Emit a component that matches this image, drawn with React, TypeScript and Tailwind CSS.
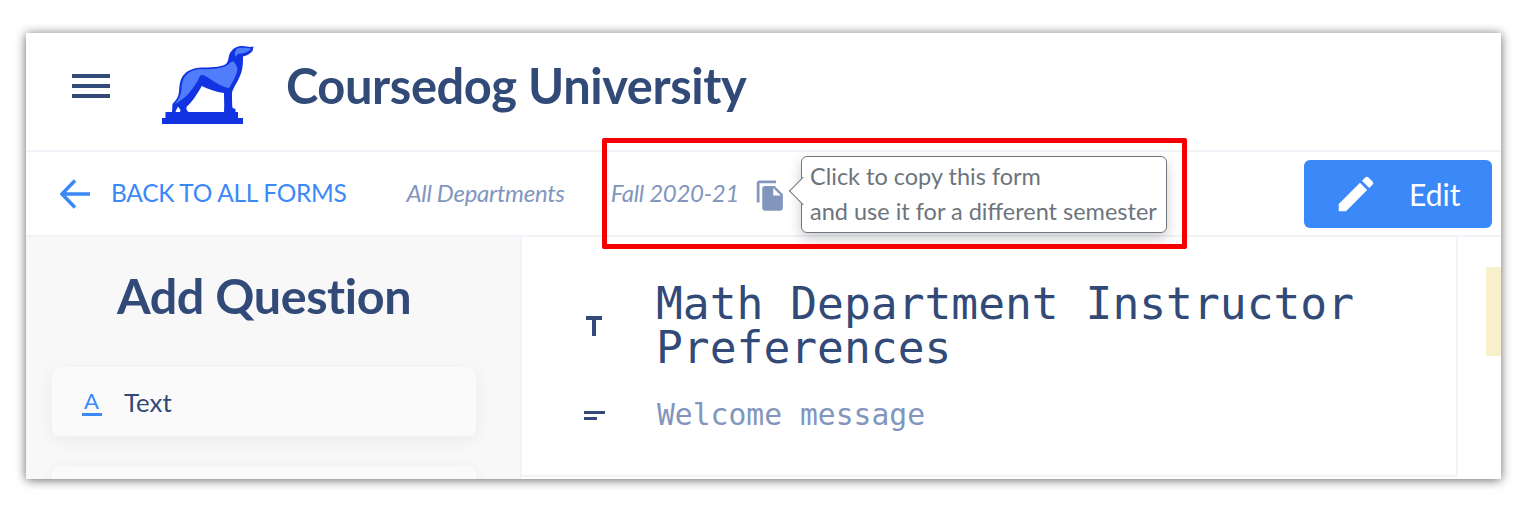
const lato = "font-['Lato','Liberation_Sans',sans-serif]";

function DogLogo() {
  return (
    <svg viewBox="162 44 92 80" className="h-[80px] w-[92px] shrink-0">
      <path
        fill="#1233e2"
        d="M253.5 45.5 L252.5 50 C250 53 246 55 243 55.5 C243 62 243 68 240 75 C237 82 233 87 232 92 C232 97 232 103 232.5 107 L235.5 108 L235.5 111 L238 111 V117 H243 V123 H162 V117 H165.5 V111 H172 L172.5 103 C176 99 178.5 96 179 91 C179.5 84 180 77 185 72.5 C189 68.5 195 67 201 66.5 C210 66.5 220 66.5 226 63 C229 60 228 56 230 52 C233 47 238 44.5 243 45 C246 45.5 250 46.5 253.5 45.5 Z"
      />
      <path
        fill="#4f7dfb"
        d="M200 68 C208 68.5 218 68.5 226 65 C229 63.5 232 59 234 61 C237 64 238 68 237 71 C235 77 232 82 229 87 C222 86 213 80 207 76 C204 74 202 73 200 75 C197 82 190 92 184 97 C180 100 177 102 174.5 103.5 C179 98 181 94 181.5 88 C182 80 184 75 189 71.5 C192 69.5 196 68.5 200 68 Z"
      />
      <path
        fill="#4f7dfb"
        d="M237 47.5 C241 46 246 47.5 251 47.5 C249 51 244 52.5 240 52.5 C238 52.5 236.5 54 235.5 56 C234 53 235 50 237 47.5 Z"
      />
      <path
        fill="#fff"
        d="M201.7 85 C208 88 216 91 224 92 C224 97 224.5 105 224 111 H188.5 C187 110 186 108 186.5 106 C191 102 197 94 201.7 85 Z"
      />
      <path fill="#fff" d="M175.5 110.5 L178 105.5 L180.5 109 L180 111 H176 Z" />
    </svg>
  );
}

function Hamburger() {
  return (
    <div className="flex w-[38px] shrink-0 flex-col gap-[6px]">
      <div className="h-1 bg-[#324a78]" />
      <div className="h-1 bg-[#324a78]" />
      <div className="h-1 bg-[#324a78]" />
    </div>
  );
}

function BackArrow() {
  return (
    <svg viewBox="0 0 30 30" className="h-[30px] w-[30px] shrink-0" fill="none" stroke="#3b88f7" strokeWidth="3.5">
      <path d="M30 15 H2 M15 1.5 L2 15 L15 28.5" />
    </svg>
  );
}

function FileCopy() {
  return (
    <svg viewBox="0 0 24 24" className="h-[33px] w-[33px] shrink-0" fill="#8296bd">
      <path d="M16 1H4c-1.1 0-2 .9-2 2v14h2V3h12V1zm-1 4l6 6v10c0 1.1-.9 2-2 2H7.99C6.89 23 6 22.1 6 21l.01-14c0-1.1.89-2 2-2h7zm-1 7h5.5L14 6.5V12z" />
    </svg>
  );
}

function Pencil() {
  return (
    <svg viewBox="0 0 24 24" className="h-[46px] w-[46px] shrink-0" fill="#fff">
      <path d="M3 17.25V21h3.75L17.81 9.94l-3.75-3.75L3 17.25zM20.71 7.04c.39-.39.39-1.02 0-1.41l-2.34-2.34c-.39-.39-1.02-.39-1.41 0l-1.83 1.83 3.75 3.75 1.83-1.83z" />
    </svg>
  );
}

function Tooltip() {
  return (
    <div className="absolute left-[775px] top-[4px] h-[77px] w-[366px] rounded-md border-[1.5px] border-[#6f7780] bg-white pl-[8px] pt-[2px] text-[23.5px] leading-[35px] text-[#6d747c] shadow-[0_6px_14px_rgba(0,0,0,0.2)]">
      <div className="absolute left-[-9px] top-[24px] h-[20px] w-[20px] rotate-45 border-b-[1.5px] border-l-[1.5px] border-[#6f7780] bg-white" />
      <div className="relative whitespace-nowrap">Click to copy this form</div>
      <div className="relative whitespace-nowrap">and use it for a different semester</div>
    </div>
  );
}

export default function App() {
  return (
    <div className={`relative h-[510px] w-[1527px] overflow-hidden bg-white pl-[26px] pt-[33px] ${lato}`}>
      <div className="flex h-[446px] w-[1475px] flex-col overflow-hidden bg-white shadow-[0_1px_10px_rgba(0,0,0,0.6)]">
        <header className="flex h-[119px] shrink-0 items-center border-b-2 border-[#f0f3f7] pb-[11px] pl-[46px]">
          <Hamburger />
          <div className="ml-[52px] mt-[-3px]">
            <DogLogo />
          </div>
          <h1 className="ml-[32px] mt-[-1px] whitespace-nowrap text-[48.8px] font-bold tracking-[-0.4px] text-[#324a78]">
            Coursedog University
          </h1>
        </header>

        <nav className="relative flex h-[85px] shrink-0 items-center border-b-2 border-[#f0f3f7] pl-[34px] pr-[9px]">
          <BackArrow />
          <span className="ml-[21px] whitespace-nowrap text-[24.5px] tracking-[-0.3px] text-[#3b88f7]">BACK TO ALL FORMS</span>
          <span className="ml-[60px] mt-[-2px] whitespace-nowrap text-[24px] italic tracking-[-0.3px] text-[#8296bd]">All Departments</span>
          <span className="ml-[46px] mt-[-2px] whitespace-nowrap text-[24px] italic tracking-[-0.3px] text-[#8296bd]">Fall 2020-21</span>
          <span className="ml-[15px] mt-[3px]">
            <FileCopy />
          </span>
          <Tooltip />
          <button className="ml-auto flex h-[68px] w-[188px] items-center rounded-md bg-[#3b88f9] pl-[29px] text-[30px] text-white">
            <Pencil />
            <span className="ml-[30px] pt-[2px]">Edit</span>
          </button>
        </nav>

        <div className="flex min-h-0 flex-1">
          <aside className="w-[496px] shrink-0 border-r-2 border-[#f0f3f7] bg-[#f8f8f8] pl-[26px] pr-[44px] pt-[27px]">
            <h2 className="whitespace-nowrap text-center text-[48.5px] font-bold leading-[62px] tracking-[-0.4px] text-[#324a78]">Add Question</h2>
            <div className="mt-[41px] flex h-[69px] items-center rounded-lg bg-[#fafafa] pl-[29px] pt-[1px] shadow-[0_4px_18px_rgba(0,0,0,0.06)]">
              <span className="flex w-[21px] flex-col items-center pt-[2px]">
                <span className="text-[22px] leading-[20px] text-[#3b88f7]">A</span>
                <span className="mt-[2px] h-[3px] w-[20px] bg-[#3b88f7]" />
              </span>
              <span className="ml-[22px] text-[25.8px] text-[#324a78]">Text</span>
            </div>
            <div className="mt-[30px] h-[69px] rounded-lg bg-[#fafafa] shadow-[0_4px_18px_rgba(0,0,0,0.06)]" />
          </aside>

          <main className="h-[240px] w-[936px] shrink-0 border-b-2 border-r-2 border-[#f0f3f7] pl-[62px] pt-[45px] font-['DejaVu_Sans_Mono',monospace]">
            <div className="flex items-center">
              <span className="flex w-[72px] shrink-0 justify-start pl-[2px]">
                <svg viewBox="0 0 16 20" className="h-[20px] w-[16px]" fill="#324a78">
                  <path d="M0 0 H16 V4 H10 V20 H6 V4 H0 Z" />
                </svg>
              </span>
              <h2 className="w-[750px] text-[44.6px] leading-[44px] text-[#324a78]">Math Department Instructor Preferences</h2>
            </div>
            <div className="mt-[27px] flex items-center">
              <span className="flex w-[73px] shrink-0 flex-col gap-[3px]">
                <span className="h-[3px] w-[21px] bg-[#324a78]" />
                <span className="h-[3px] w-[13px] bg-[#324a78]" />
              </span>
              <p className="text-[29.7px] leading-[36px] text-[#8296bd]">Welcome message</p>
            </div>
          </main>

          <div className="flex-1 pl-[28px] pt-[30px]">
            <div className="h-[89px] bg-[#f8efcd]" />
          </div>
        </div>
      </div>

      <div className="absolute left-[602px] top-[138px] h-[111px] w-[585px] rounded-[2px] border-[5px] border-[#f50000]" />
    </div>
  );
}
